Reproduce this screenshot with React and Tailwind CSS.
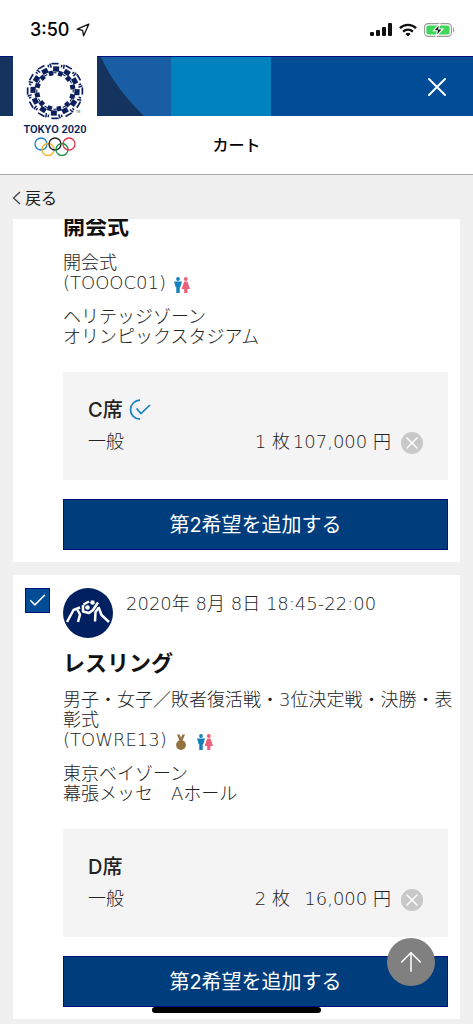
import { X, Check, ArrowUp } from "lucide-react";

const items = [
  {
    id: "TOOOC01",
    title: "開会式",
    summary: "開会式",
    zone: "ヘリテッジゾーン",
    venue: "オリンピックスタジアム",
    seat: "C席",
    available: true,
    quantity: 1,
    price: "107,000",
    scrolled: true,
  },
  {
    id: "TOWRE13",
    title: "レスリング",
    summary: "男子・女子／敗者復活戦・3位決定戦・決勝・表彰式",
    zone: "東京ベイゾーン",
    venue: "幕張メッセ　Aホール",
    seat: "D席",
    quantity: 2,
    price: "16,000",
    date: "2020年 8月 8日 18:45-22:00",
    medal: true,
  },
];

function StatusBar() {
  return (
    <div className="flex h-14 items-center justify-between pt-1 pr-[18px] pl-[30px]">
      <div className="flex items-center gap-1.5 text-lg font-medium text-black">
        <span>3:50</span>
        <svg width="14" height="14" viewBox="0 0 14 14" fill="none" stroke="#111" strokeWidth="1.3" strokeLinejoin="round">
          <path d="M12.8 1.2 1.2 6.2l5.4 1.2 1 5.4z" />
        </svg>
      </div>
      <div className="flex items-center gap-[7px]">
        <svg width="22" height="14" viewBox="0 0 22 14" fill="#111">
          <rect x="0" y="9" width="4" height="4" rx="1" />
          <rect x="6" y="7" width="4" height="6" rx="1" />
          <rect x="12" y="4" width="4" height="9" rx="1" />
          <rect x="18" y="0" width="4" height="13" rx="1" />
        </svg>
        <svg width="18" height="14" viewBox="0 0 18 14" fill="none" stroke="#111" strokeWidth="2.4">
          <path d="M.9 5.2a11.6 11.6 0 0 1 16.2 0" />
          <path d="M4.1 8.6a7 7 0 0 1 9.8 0" />
          <path d="M9 13.4 6.4 10.9a3.8 3.8 0 0 1 5.2 0z" fill="#111" stroke="none" />
        </svg>
        <svg width="31" height="14" viewBox="0 0 31 14">
          <rect x=".6" y=".6" width="26.8" height="12.8" rx="3.6" fill="#fff" stroke="#999" strokeWidth="1.1" />
          <rect x="2.4" y="2.4" width="23.2" height="9.2" rx="2" fill="#3fd65c" />
          <path d="M29 4.6c1.6.6 1.6 4.2 0 4.8z" fill="#999" />
          <path d="M15.8.8 9.4 7.8h4l-1.3 5.4 6.8-7.2h-4.2z" fill="#111" stroke="#fff" strokeWidth="1.1" />
        </svg>
      </div>
    </div>
  );
}

const spokes = Array.from({ length: 12 }, (_, i) => i * 30);

function Emblem() {
  return (
    <svg width="70" height="98" viewBox="0 0 70 98" role="img" aria-label="TOKYO 2020">
      <g fill="#0b1f5c" transform="translate(35 33)">
        {spokes.map((a) => (
          <g key={a} transform={`rotate(${a})`}>
            <rect x="-3" y="-24.6" width="6" height="5.2" transform="rotate(3)" />
            <rect x="-3.6" y="-28.2" width="7.2" height="1.7" />
            <path d="M-5.2 -27.4 -3.6 -23.4" stroke="#0b1f5c" strokeWidth="1.5" />
            <rect x="-2.2" y="-20.6" width="4.4" height="5" transform="rotate(17)" />
            <path d="M-2.4 -18.2H1.6" stroke="#0b1f5c" strokeWidth="1.1" />
            <path d="M0 -27V-24.500" stroke="#0b1f5c" strokeWidth="1.500" transform="rotate(15)" />
          </g>
        ))}
      </g>
      <text x="58" y="55" fontSize="3" fill="#444" textAnchor="middle">TM</text>
      <text x="35" y="75" textAnchor="middle" fontFamily="Roboto" fontSize="11" fontWeight="600" fill="#0b1f5c">
        TOKYO 2020
      </text>
      <g fill="none" strokeWidth="1.3">
        <circle cx="21" cy="86" r="6" stroke="#1c86cf" />
        <circle cx="28" cy="91.5" r="6" stroke="#f4b02a" />
        <circle cx="35" cy="86" r="6" stroke="#222" />
        <circle cx="42" cy="91.5" r="6" stroke="#129447" />
        <circle cx="49" cy="86" r="6" stroke="#e8304f" />
      </g>
    </svg>
  );
}

function Header() {
  return (
    <header className="relative border-b border-[#a8a8a8] bg-white">
      <div className="flex h-[60px] border-t border-[#00107c] bg-[#004c97]">
        <div className="w-[97px] bg-[#14335f]" />
        <svg width="74" height="59" viewBox="0 0 74 59">
          <path d="M0 0h74v59H0z" fill="#195da5" />
          <path d="M0 0h4Q17 30 47 59H0z" fill="#14335f" />
        </svg>
        <div className="w-[100px] bg-[#0082be]" />
        <div className="flex flex-1 items-center justify-end pr-5">
          <button type="button" aria-label="閉じる" className="text-white">
            <X size={32} strokeWidth={2} absoluteStrokeWidth />
          </button>
        </div>
      </div>
      <h1 className="py-[17px] text-center text-base leading-6 font-medium text-black">カート</h1>
      <a href="#" className="absolute top-0 left-[13px] flex h-[104px] w-[84px] justify-center bg-white pt-0.5">
        <Emblem />
      </a>
    </header>
  );
}

function GenderIcon() {
  return (
    <svg width="16" height="17" viewBox="0 0 16 17" className="shrink-0">
      <g fill="#1180bd">
        <circle cx="4" cy="2" r="1.9" />
        <path d="M0 4.5h8L6.3 10.2H5.7V16H2.3V10.2h-.6z" />
      </g>
      <g fill="#ee6079">
        <circle cx="11.8" cy="2" r="1.9" />
        <path d="M10.2 4.5h3.2L16 12h-2.6v4h-3.2v-4H7.6z" />
      </g>
    </svg>
  );
}

function MedalIcon() {
  return (
    <svg width="12" height="17" viewBox="0 0 12 17" className="shrink-0">
      <path d="M2 .6h2.600L6 3.800 7.400.6H10L7.600 6.200H4.400z" fill="#94713f" />
      <circle cx="6" cy="11" r="4.900" fill="#94713f" />
    </svg>
  );
}

function WrestlingIcon() {
  return (
    <svg width="50" height="50" viewBox="0 0 50 50" className="shrink-0">
      <circle cx="25" cy="25" r="25" fill="#00205f" />
      <g fill="none" stroke="#fff" strokeWidth="2.5" strokeLinejoin="round">
        <path d="M4 34 10.5 22 17 19.5" />
        <path d="M15 34 17 26.5 14.5 22" />
        <path d="M20 17V23.5l6 1.5 4-3 5-7.5" />
        <path d="M20.5 16.5 26 13.5" />
        <path d="M32 33.5 32.5 24 36 19.5" />
        <path d="M35.5 19 38.5 27 46 34" />
      </g>
      <circle cx="24.5" cy="19.5" r="2.3" fill="#fff" />
      <circle cx="29.5" cy="14.5" r="2.3" fill="#fff" />
    </svg>
  );
}

function AvailableIcon() {
  return (
    <svg width="22" height="22" viewBox="0 0 22 22" fill="none" stroke="#1482c5" strokeWidth="1.7">
      <path d="M11 1.2A9.5 9.5 0 1 0 11 20.2" />
      <path d="M7.5 9.5 12 14.5 21 6" />
    </svg>
  );
}

function CartItem({ item }) {
  return (
    <article className="relative overflow-hidden bg-white pr-3 pb-3 pl-[50px] font-['DejaVu_Sans','Noto_Sans_CJK_JP',sans-serif] text-lg leading-5 font-light text-[#222]">
      {item.date && (
        <div className="flex gap-[13px] pt-[13px] pb-2.5">
          <label className="absolute left-3 size-[25px]">
            <input
              type="checkbox"
              defaultChecked
              aria-label={item.title}
              className="peer block size-[25px] appearance-none border border-[#00107c] bg-white checked:bg-[#004c97]"
            />
            <Check
              size={21}
              strokeWidth={1.5}
              absoluteStrokeWidth
              className="pointer-events-none absolute inset-0 m-auto hidden text-white peer-checked:block"
            />
          </label>
          <WrestlingIcon />
          <p className="pt-1.5">{item.date}</p>
        </div>
      )}

      <h2 className={`mb-2.5 text-[22px] leading-8 font-bold text-[#111] ${item.scrolled ? "-mt-2" : ""}`}>{item.title}</h2>

      <p className="-mr-2">{item.summary}</p>
      <div className="flex h-5 items-center gap-2">
        <span>({item.id})</span>
        <span className="flex gap-2.5 pt-1">
          {item.medal && <MedalIcon />}
          <GenderIcon />
        </span>
      </div>
      <p className="mt-3.5">{item.zone}</p>
      <p>{item.venue}</p>

      <section className="mt-[25px] bg-[#f4f4f4] px-[25px] pt-6 pb-[26px]">
        <h3 className="flex items-center gap-1.5 font-['Inter','Noto_Sans_CJK_JP',sans-serif] text-xl leading-7 font-medium">
          {item.seat}
          {item.available && <AvailableIcon />}
        </h3>
        <div className="mt-1.5 flex h-6 items-center">
          <span>一般</span>
          <span className="ml-auto">{item.quantity} 枚</span>
          <span className="w-[101px] text-right">{item.price} 円</span>
          <button
            type="button"
            aria-label="削除"
            className="ml-2.5 flex size-[22px] items-center justify-center self-end rounded-full bg-[#c8c8c8] text-white"
          >
            <X size={20} strokeWidth={1.5} absoluteStrokeWidth />
          </button>
        </div>
      </section>

      <button
        type="button"
        className="mt-[19px] h-[51px] w-full border border-[#00107c] bg-[#003d7c] font-['Inter','Noto_Sans_CJK_JP',sans-serif] text-xl font-normal text-white"
      >
        第2希望を追加する
      </button>
    </article>
  );
}

export default function App() {
  return (
    <div className="min-h-screen bg-[#f0f0f0] font-['Inter','Noto_Sans_CJK_JP',sans-serif]">
      <div className="bg-white">
        <StatusBar />
        <Header />
      </div>

      <nav className="px-3 pt-[13px] pb-[11px]">
        <a href="#" className="flex h-5 w-fit items-center gap-1 text-base text-[#222]">
          <svg width="9" height="14" viewBox="0 0 9 14" fill="none" stroke="#444" strokeWidth="1.3">
            <path d="M8 1 1.5 7 8 13" />
          </svg>
          戻る
        </a>
      </nav>

      <main className="flex flex-col gap-[13px] px-[13px] pb-1">
        {items.map((item) => (
          <CartItem key={item.id} item={item} />
        ))}
      </main>

      <a
        href="#"
        aria-label="ページの先頭へ"
        className="fixed right-[38px] bottom-[38px] flex size-12 items-center justify-center rounded-full bg-[#808080] text-white"
      >
        <ArrowUp size={32} strokeWidth={1.5} absoluteStrokeWidth />
      </a>
      <div className="fixed inset-x-0 bottom-[11px] mx-auto h-1.5 w-[169px] rounded-full bg-black" />
    </div>
  );
}
